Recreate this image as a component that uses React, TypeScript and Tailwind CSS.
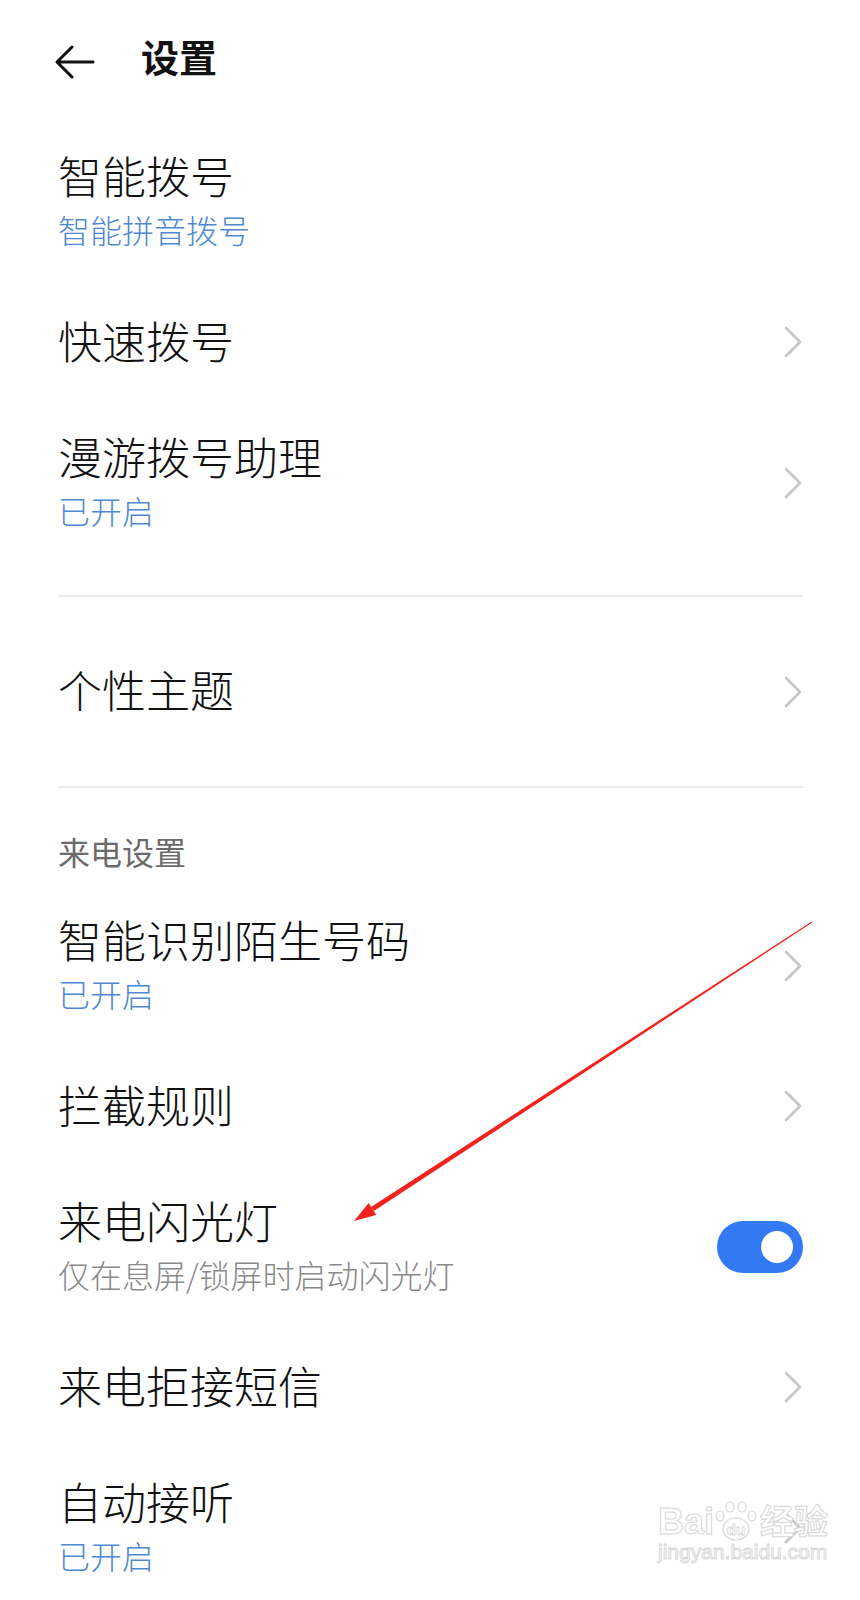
import React from 'react';

const font = "font-['Noto_Sans_CJK_SC','Noto_Sans',sans-serif]";

function Chevron() {
  return (
    <svg width="20" height="32" viewBox="0 0 20 32" fill="none" className="shrink-0">
      <path d="M3 2 L17 16 L3 30" stroke="#c6c6c6" strokeWidth="2.6" strokeLinecap="round" strokeLinejoin="round" />
    </svg>
  );
}

function Toggle() {
  return (
    <div className="w-[86px] h-[52px] rounded-full bg-[#3479f4] flex items-center justify-end pr-[10px] shrink-0">
      <div className="w-[32px] h-[32px] rounded-full bg-white" />
    </div>
  );
}

type RowProps = {
  title: string;
  sub?: string;
  subTone?: 'blue' | 'gray';
  right?: 'chevron' | 'toggle' | 'none';
  height?: string;
};

function Row({ title, sub, subTone = 'blue', right = 'chevron', height }: RowProps) {
  const h = height ?? (sub ? 'h-[165px]' : 'h-[116px]');
  return (
    <div className={`${h} flex items-center justify-between`}>
      <div className="flex flex-col gap-[9px] pb-[5px]">
        <div className="text-[44px] leading-[50px] font-light text-[#111111]">{title}</div>
        {sub && (
          <div className={`text-[32px] leading-[40px] font-light ${subTone === 'blue' ? 'text-[#4f88d3]' : 'text-[#8a8a8a]'}`}>
            {sub}
          </div>
        )}
      </div>
      {right === 'chevron' && <Chevron />}
      {right === 'toggle' && <Toggle />}
    </div>
  );
}

function Divider() {
  return <div className="h-[2px] bg-[#ececec]" />;
}

export default function App() {
  return (
    <div className={`relative w-[860px] h-[1600px] overflow-hidden bg-white ${font}`}>
      {/* header */}
      <div className="h-[119px] flex items-center pl-[55px] gap-[46px]">
        <svg width="40" height="34" viewBox="0 0 40 34" fill="none" className="mt-[4px]">
          <path d="M38 17 H3 M17 2 L2 17 L17 32" stroke="#111" strokeWidth="3" strokeLinecap="round" strokeLinejoin="round" />
        </svg>
        <div className="text-[38px] leading-[44px] font-bold text-[#111111] pb-[8px]">设置</div>
      </div>

      <div className="pl-[58px] pr-[57px]">
        <Row title="智能拨号" sub="智能拼音拨号" right="none" />
        <Row title="快速拨号" />
        <Row title="漫游拨号助理" sub="已开启" />

        <div className="mt-[30px]">
          <Divider />
        </div>
        <Row title="个性主题" height="h-[189px]" />
        <Divider />

        <div className="pt-[47px] pb-[16px] text-[32px] leading-[32px] text-[#6b6b6b] font-normal">来电设置</div>
        <Row title="智能识别陌生号码" sub="已开启" />
        <Row title="拦截规则" />
        <Row title="来电闪光灯" sub="仅在息屏/锁屏时启动闪光灯" subTone="gray" right="toggle" />
        <Row title="来电拒接短信" />
        <Row title="自动接听" sub="已开启" />
      </div>

      {/* red annotation arrow */}
      <svg className="absolute left-0 top-0 pointer-events-none" width="860" height="1600" viewBox="0 0 860 1600">
        <polygon points="812.3,922.4 811.7,921.6 371,1206.9 373.8,1211.1" fill="#f2231c" />
        <polygon points="354,1221 376.2,1214.9 368.6,1203.1" fill="#f2231c" />
      </svg>

      {/* watermark */}
      <div className="absolute left-[658px] top-[1500px] flex flex-col items-start pointer-events-none font-['Liberation_Sans','Noto_Sans_CJK_SC',sans-serif]">
        <div className="flex items-end">
          <span className="text-[36px] leading-[40px] font-bold text-white [-webkit-text-stroke:1px_#d6d6d6]">Bai</span>
          <svg width="44" height="44" viewBox="0 0 44 44" fill="none" className="-mb-[2px]">
            <ellipse cx="22" cy="29" rx="13" ry="11" stroke="#d6d6d6" strokeWidth="1.2" fill="white" />
            <ellipse cx="16" cy="7" rx="4" ry="5" stroke="#d6d6d6" strokeWidth="1.2" />
            <ellipse cx="28" cy="7" rx="4" ry="5" stroke="#d6d6d6" strokeWidth="1.2" />
            <ellipse cx="6" cy="16" rx="4" ry="5" stroke="#d6d6d6" strokeWidth="1.2" />
            <ellipse cx="38" cy="16" rx="4" ry="5" stroke="#d6d6d6" strokeWidth="1.2" />
            <text x="22" y="35" textAnchor="middle" fontSize="15" fontWeight="bold" fill="white" stroke="#d6d6d6" strokeWidth="0.8">du</text>
          </svg>
          <span className="text-[34px] leading-[40px] font-bold text-white [-webkit-text-stroke:1px_#d6d6d6] ml-[2px]">经验</span>
        </div>
        <span className="text-[21px] leading-[24px] text-white [-webkit-text-stroke:1px_#d8d8d8] -mt-[2px]">jingyan.baidu.com</span>
      </div>
    </div>
  );
}
